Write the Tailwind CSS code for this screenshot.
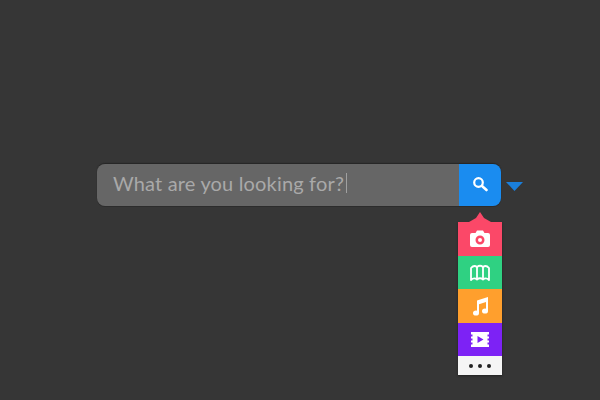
<!DOCTYPE html>
<html lang="en">
<head>
  <meta charset="UTF-8">
  <title>Search</title>
  <script src="https://cdn.jsdelivr.net/npm/@tailwindcss/browser@4"></script>
</head>
<body class="bg-[#363636] w-[600px] h-[400px] overflow-hidden font-['Lato',sans-serif]">
  <div class="pt-[164px] pl-[97px]">
    <!-- search bar -->
    <div class="flex items-center">
      <div class="flex w-[404px] h-[42px] rounded-[8px] overflow-hidden shadow-[0_-1px_1px_#262626,0_1px_0_#2c2c2c]">
        <div class="flex-1 bg-[#666666] flex items-center pl-[16px] pb-[4px]">
          <span class="text-[20px] text-[#a9a9a9] tracking-[0.17px]">What are you looking for?</span>
          <span class="w-px h-[20px] bg-[#a0a0a0] ml-[2px]"></span>
        </div>
        <div class="w-[42px] bg-[#1a8cf0] flex items-center justify-center pb-[2px]">
          <svg width="16" height="16" viewBox="0 0 16 16" fill="none" stroke="#fff">
            <circle cx="6.500" cy="6.500" r="4.300" stroke-width="2.200"/>
            <path d="M10 10l4.500 4" stroke-width="2.600" stroke-linecap="round"/>
          </svg>
        </div>
      </div>
      <svg class="ml-[5px] mt-[3px]" width="17" height="9" viewBox="0 0 17 9"><path d="M0 0h17l-8.500 9z" fill="#1a7fdc"/></svg>
    </div>

    <!-- category menu -->
    <div class="relative ml-[361px] mt-[16px] w-[44px] flex flex-col shadow-[0_1px_2px_#222]">
      <svg class="absolute -top-[10px] left-[11px]" width="22" height="10" viewBox="0 0 22 10"><path d="M0 10L7 6 11 0l4 6 7 4z" fill="#fb4868"/></svg>
      <div class="h-[34px] bg-[#fb4868] flex items-center justify-center pb-[2px]">
        <svg width="20" height="17" viewBox="0 0 20 17">
          <path fill="#fff" fill-rule="evenodd" d="M2 3h3.500l1.500-2.500h6L14.500 3H18a2 2 0 0 1 2 2v10a2 2 0 0 1-2 2H2a2 2 0 0 1-2-2V5a2 2 0 0 1 2-2zm8 2.500a4.500 4.500 0 1 0 0 9 4.500 4.500 0 0 0 0-9zm0 2.500a2 2 0 1 1 0 4 2 2 0 0 1 0-4z"/>
        </svg>
      </div>
      <div class="h-[33px] bg-[#2fd182] flex items-center justify-center">
        <svg width="20" height="18" viewBox="0 0 20 18" fill="none" stroke="#fff" stroke-width="1.800" stroke-linejoin="round">
          <path d="M1 4Q4 .5 7 3 10 .5 13 3 16 .5 19 4V16Q16 13 13 15.500 10 13 7 15.500 4 13 1 16z"/>
          <path d="M7 3V15.500M13 3V15.500"/>
        </svg>
      </div>
      <div class="h-[34px] bg-[#ff9f2d] flex items-center justify-center">
        <svg width="15" height="19" viewBox="0 0 15 19" fill="#fff">
          <path d="M4 3.500L15 0v14h-2V5L6 7.200V16H4z"/>
          <ellipse cx="3" cy="16" rx="3" ry="2.600"/>
          <ellipse cx="12" cy="14" rx="3" ry="2.600"/>
        </svg>
      </div>
      <div class="h-[33px] bg-[#7d22f5] flex items-center justify-center">
        <svg width="18" height="15" viewBox="0 0 18 15">
          <path fill="#fff" fill-rule="evenodd" d="M0 0h18v2.500h-1.500v2H18v2h-1.500v2H18v2h-1.500v2H18V15H0v-2.500h1.500v-2H0v-2h1.500v-2H0v-2h1.500v-2H0zM6.500 4v7l6-3.500z"/>
        </svg>
      </div>
      <div class="h-[19px] bg-[#f5f5f5] flex items-center justify-center gap-[5px]">
        <span class="w-[4px] h-[4px] rounded-full bg-[#222]"></span>
        <span class="w-[4px] h-[4px] rounded-full bg-[#222]"></span>
        <span class="w-[4px] h-[4px] rounded-full bg-[#222]"></span>
      </div>
    </div>
  </div>
</body>
</html>
